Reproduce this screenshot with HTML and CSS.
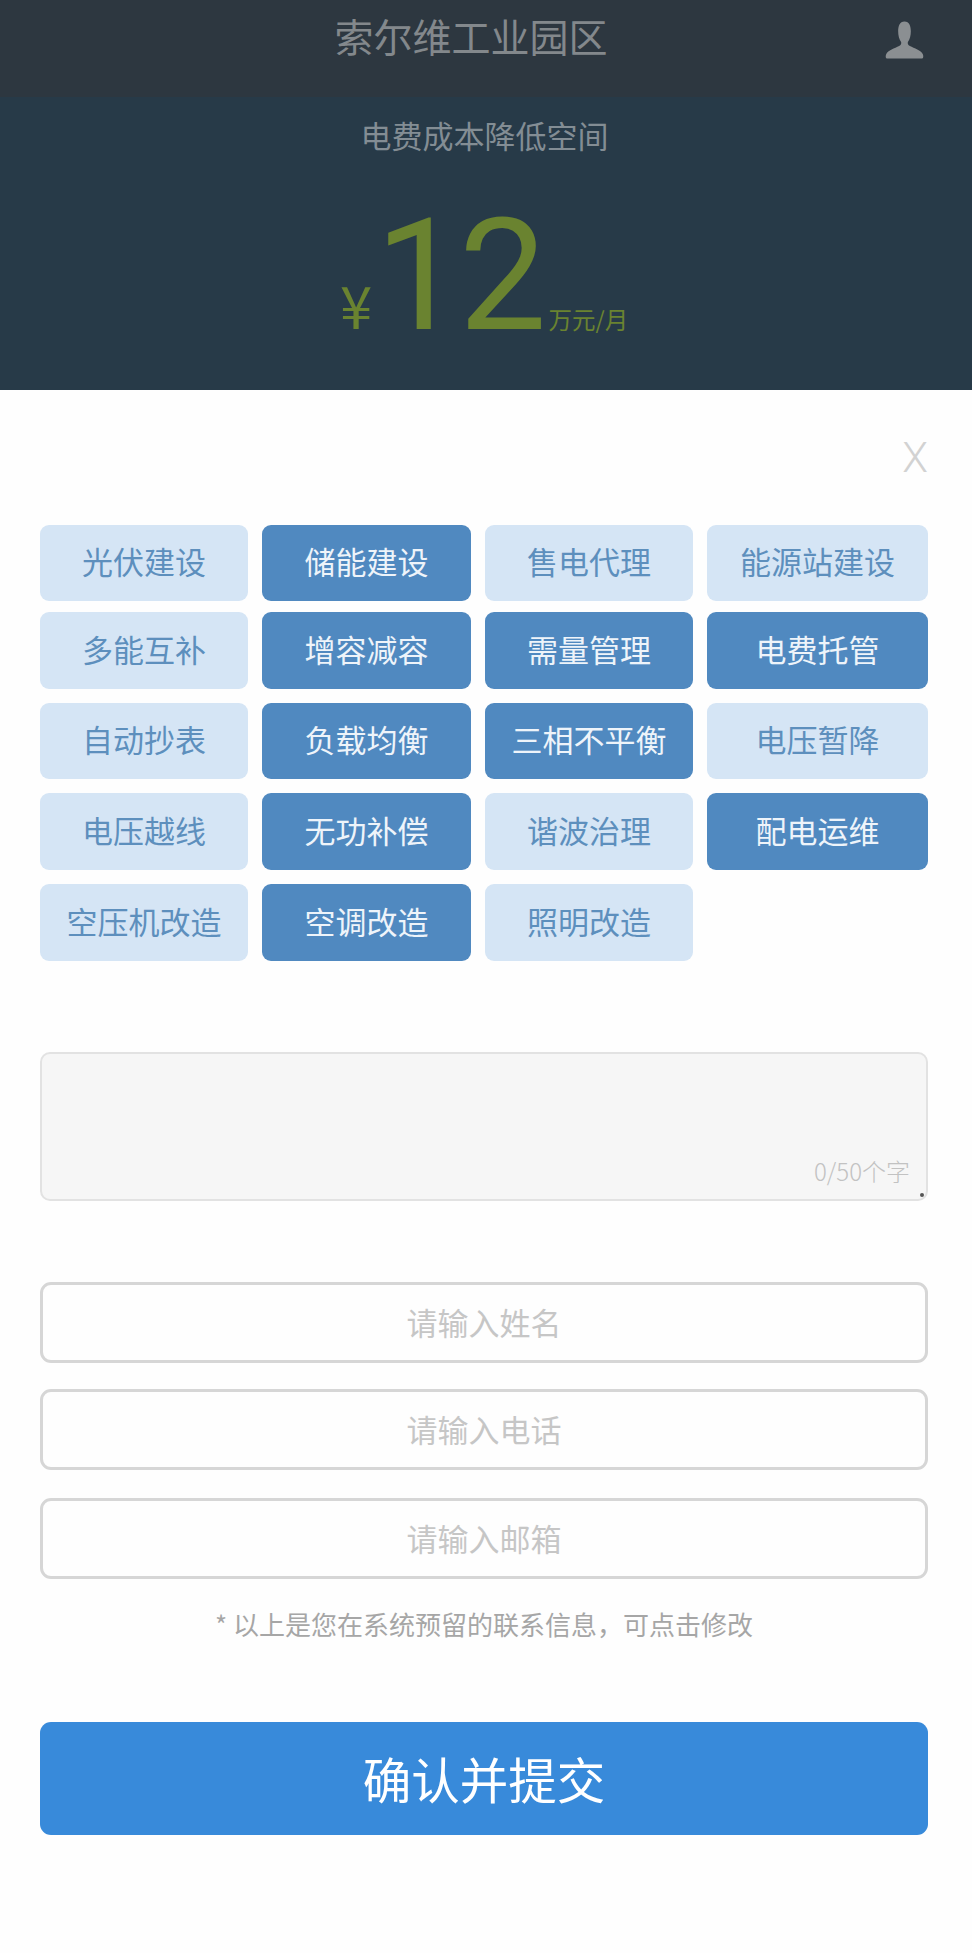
FILE: index.html
```html
<!DOCTYPE html>
<html lang="zh-CN">
<head>
<meta charset="utf-8">
<title>索尔维工业园区</title>
<link rel="stylesheet" href="styles.css">
</head>
<body>
<header class="topbar">
  <h1 class="topbar-title">索尔维工业园区</h1>
  <svg class="user-icon" viewBox="0 0 40 38" aria-hidden="true">
    <path d="M20 0C15 0 13.500 5 13.500 10c0 4.500 1 8 3 11 .6 1.500-.2 3-2 4.200C10 27.500 3 29.500 1.200 33.500.4 35.500.5 38 2.500 38h35c2 0 2.100-2.500 1.300-4.500C37 29.500 30 27.500 25.500 25.200c-1.800-1.200-2.600-2.700-2-4.200 2-3 3-6.500 3-11C26.500 5 25 0 20 0z"/>
  </svg>
</header>
<section class="hero">
  <p class="hero-label">电费成本降低空间</p>
  <div class="amount">
    <span class="currency">¥</span><span class="value">12</span><span class="unit">万元/月</span>
  </div>
</section>
<main class="sheet">
  <div class="close-row"><span class="close">X</span></div>
  <div class="chips">
    <div class="chip first-row">光伏建设</div>
    <div class="chip on first-row">储能建设</div>
    <div class="chip first-row">售电代理</div>
    <div class="chip first-row">能源站建设</div>
    <div class="chip">多能互补</div>
    <div class="chip on">增容减容</div>
    <div class="chip on">需量管理</div>
    <div class="chip on">电费托管</div>
    <div class="chip">自动抄表</div>
    <div class="chip on">负载均衡</div>
    <div class="chip on">三相不平衡</div>
    <div class="chip">电压暂降</div>
    <div class="chip">电压越线</div>
    <div class="chip on">无功补偿</div>
    <div class="chip">谐波治理</div>
    <div class="chip on">配电运维</div>
    <div class="chip">空压机改造</div>
    <div class="chip on">空调改造</div>
    <div class="chip">照明改造</div>
  </div>
  <div class="note-box">
    <textarea class="note" aria-label="备注"></textarea>
    <span class="counter">0/50个字</span>
    <span class="grip"></span>
  </div>
  <div class="fields">
    <input class="field" type="text" placeholder="请输入姓名">
    <input class="field" type="text" placeholder="请输入电话">
    <input class="field field-last" type="text" placeholder="请输入邮箱">
  </div>
  <p class="hint">* 以上是您在系统预留的联系信息，可点击修改</p>
  <button class="submit" type="button">确认并提交</button>
</main>
</body>
</html>
```
FILE: styles.css
```css
* { box-sizing: border-box; }
html, body { margin: 0; padding: 0; }
body {
  background: #fefefe;
  font-family: "Noto Sans CJK SC", "Noto Sans", sans-serif;
  height: 1953px;
  overflow: hidden;
}
.topbar {
  height: 97px;
  background: #2d3740;
  display: flex;
  align-items: flex-start;
  justify-content: center;
  position: relative;
  padding-right: 30px;
}
.topbar-title {
  margin: 9px 0 0;
  font-size: 39px;
  line-height: 52px;
  font-weight: 400;
  color: #83888c;
}
.user-icon {
  position: absolute;
  left: 885px;
  top: 21px;
  width: 39px;
  height: 38px;
  fill: #8b8f92;
}
.hero {
  height: 293px;
  background: #273a48;
  padding-top: 18px;
}
.hero-label {
  margin: 0;
  padding-right: 3px;
  text-align: center;
  font-size: 31px;
  line-height: 40px;
  font-weight: 400;
  color: #838d94;
}
.amount {
  display: flex;
  align-items: baseline;
  padding-left: 340px;
  margin-top: 26px;
  color: #6a8330;
  height: 190px;
}
.currency {
  font-size: 58px;
  font-weight: 400;
  line-height: 190px;
  margin-right: 3px;
}
.value {
  font-family: "Roboto", "Liberation Sans", sans-serif;
  font-size: 156px;
  font-weight: 400;
  line-height: 190px;
  letter-spacing: -4px;
}
.unit {
  font-size: 23.500px;
  font-weight: 400;
  line-height: 190px;
  margin-left: 6px;
}
.sheet { padding: 0 44px 0 40px; }
.close-row {
  display: flex;
  justify-content: flex-end;
  height: 135px;
  padding-top: 43px;
}
.close {
  font-family: "Roboto", sans-serif;
  font-size: 42px;
  font-weight: 300;
  line-height: 50px;
  color: #d2d2d2;
}
.chips {
  display: grid;
  grid-template-columns: 208px 209px 208px 221px;
  grid-template-rows: 73px 77px 76px 77px 77px;
  column-gap: 14px;
  row-gap: 14px;
}
.chip {
  border-radius: 9px;
  background: #d5e5f5;
  color: #5d8fbd;
  font-size: 31px;
  font-weight: 400;
  display: flex;
  align-items: center;
  justify-content: center;
  padding-bottom: 5px;
}
.chip.first-row { height: 76px; }
.chip.on { background: #5089c0; color: #eef4fa; }
.note-box {
  position: relative;
  margin-top: 91px;
  height: 149px;
}
.note {
  display: block;
  width: 100%;
  height: 100%;
  resize: none;
  background: #f6f6f6;
  border: 2px solid #e2e2e2;
  border-radius: 10px;
  outline: none;
}
.counter {
  position: absolute;
  right: 18px;
  bottom: 14px;
  font-size: 24px;
  line-height: 32px;
  font-weight: 300;
  color: #c2c2c2;
}
.grip {
  position: absolute;
  right: 4px;
  bottom: 4px;
  width: 4px;
  height: 4px;
  border-radius: 50%;
  background: #555;
}
.fields {
  margin-top: 81px;
  display: flex;
  flex-direction: column;
  gap: 26px;
}
.field {
  display: block;
  width: 100%;
  height: 81px;
  background: #fefefe;
  border: 3px solid #d6d6d6;
  border-radius: 11px;
  outline: none;
  text-align: center;
  font-family: inherit;
  font-size: 31px;
  font-weight: 400;
  padding: 0 0 3px;
}
.field-last { margin-top: 2px; }
.field::placeholder { color: #c6c6c6; opacity: 1; }
.hint {
  margin: 27px 0 0;
  text-align: center;
  font-size: 26px;
  line-height: 36px;
  font-weight: 400;
  color: #a6a6a6;
}
.submit {
  display: block;
  width: 100%;
  height: 113px;
  margin-top: 80px;
  border: 0;
  border-radius: 11px;
  background: #388ada;
  color: #fff;
  font-family: inherit;
  font-size: 48.500px;
  font-weight: 400;
  padding: 0 0 2px;
}
```
